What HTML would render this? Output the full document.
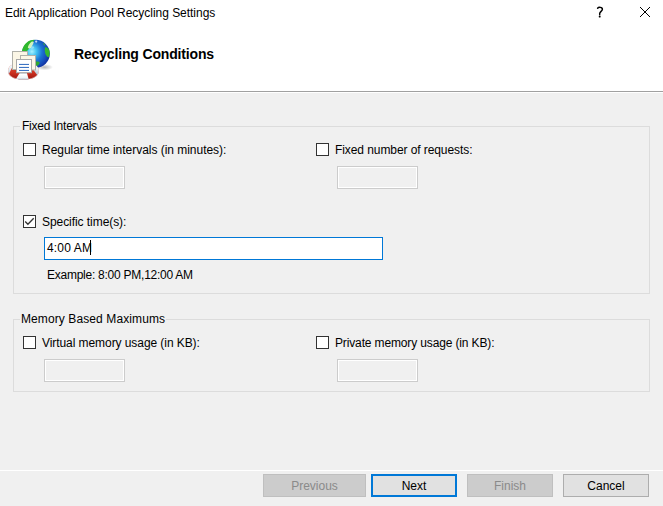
<!DOCTYPE html>
<html><head><meta charset="utf-8">
<style>
html,body{margin:0;padding:0;}
body{width:663px;height:506px;position:relative;overflow:hidden;background:#f0f0f0;font-family:"Liberation Sans",sans-serif;font-size:12px;color:#000;}
.a{position:absolute;}
.t{position:absolute;line-height:20px;white-space:pre;font-size:12px;}
.hdr{position:absolute;left:0;top:0;width:663px;height:91px;background:#fff;}
.sep1{position:absolute;left:0;top:91px;width:663px;height:1px;background:#a0a0a0;}
.sep1w{position:absolute;left:0;top:92px;width:663px;height:1px;background:#fff;}
.gb{position:absolute;border:1px solid #dcdcdc;box-sizing:border-box;}
.gbl{position:absolute;background:#f0f0f0;height:3px;}
.cb{position:absolute;width:13px;height:13px;box-sizing:border-box;border:1px solid #333;background:#fff;}
.tbd{position:absolute;box-sizing:border-box;border:1px solid #cccccc;background:#f0f0f0;box-shadow:inset 0 0 0 1px #fff;}
.tba{position:absolute;box-sizing:border-box;border:1px solid #0078d7;background:#fff;}
.btn{position:absolute;top:474px;height:23px;box-sizing:border-box;text-align:center;}
.btn span{position:absolute;left:0;right:0;top:1px;line-height:20px;}
</style></head><body>
<div class="hdr"></div>
<div class="sep1"></div>
<div class="sep1w"></div>

<div class="t" style="left:5px;top:3px;letter-spacing:-0.03px;">Edit Application Pool Recycling Settings</div>
<div class="t" style="left:74px;top:44px;font-weight:bold;font-size:14px;letter-spacing:-0.16px;">Recycling Conditions</div>

<!-- help ? -->
<svg class="a" style="left:590px;top:2px" width="20" height="20" viewBox="0 0 20 20">
  <path d="M7.6 6.2 C8.5 5.0 12.4 4.8 12.4 7.3 C12.4 9.0 9.7 9.8 9.7 11.6 L9.7 12.4" fill="none" stroke="#000" stroke-width="1.45" stroke-linecap="round"/>
  <rect x="8.8" y="13.6" width="1.8" height="1.8" rx="0.4" fill="#000"/>
</svg>
<!-- close X -->
<svg class="a" style="left:640px;top:7px" width="10" height="10" viewBox="0 0 10 10" shape-rendering="crispEdges" fill="#000"><rect x="0" y="0" width="1" height="1"/><rect x="9" y="0" width="1" height="1"/><rect x="1" y="1" width="1" height="1"/><rect x="8" y="1" width="1" height="1"/><rect x="2" y="2" width="1" height="1"/><rect x="7" y="2" width="1" height="1"/><rect x="3" y="3" width="1" height="1"/><rect x="6" y="3" width="1" height="1"/><rect x="4" y="4" width="1" height="1"/><rect x="5" y="4" width="1" height="1"/><rect x="5" y="5" width="1" height="1"/><rect x="4" y="5" width="1" height="1"/><rect x="6" y="6" width="1" height="1"/><rect x="3" y="6" width="1" height="1"/><rect x="7" y="7" width="1" height="1"/><rect x="2" y="7" width="1" height="1"/><rect x="8" y="8" width="1" height="1"/><rect x="1" y="8" width="1" height="1"/><rect x="9" y="9" width="1" height="1"/><rect x="0" y="9" width="1" height="1"/></svg>

<!-- icon -->
<svg class="a" style="left:4px;top:34px" width="52" height="52" viewBox="0 0 52 52">
  <defs>
    <radialGradient id="gl" cx="0.36" cy="0.42" r="0.66">
      <stop offset="0" stop-color="#a8f2ff"/>
      <stop offset="0.25" stop-color="#44c4f2"/>
      <stop offset="0.55" stop-color="#1c74d2"/>
      <stop offset="0.85" stop-color="#1646b6"/>
      <stop offset="1" stop-color="#0e2e9c"/>
    </radialGradient>
    <radialGradient id="sh" cx="0.5" cy="0.5" r="0.5">
      <stop offset="0" stop-color="#000" stop-opacity="0.28"/>
      <stop offset="1" stop-color="#000" stop-opacity="0"/>
    </radialGradient>
    <linearGradient id="rw" x1="0" y1="0" x2="0" y2="1">
      <stop offset="0" stop-color="#ffffff"/>
      <stop offset="0.6" stop-color="#e4eef4"/>
      <stop offset="1" stop-color="#9fb6c8"/>
    </linearGradient>
    <linearGradient id="rw2" x1="0" y1="0" x2="0" y2="1">
      <stop offset="0" stop-color="#9fb0c0"/>
      <stop offset="0.25" stop-color="#ffffff"/>
      <stop offset="0.7" stop-color="#eef4f8"/>
      <stop offset="1" stop-color="#98b0c4"/>
    </linearGradient>
    <linearGradient id="rr" x1="0" y1="0" x2="0" y2="1">
      <stop offset="0" stop-color="#e6583e"/>
      <stop offset="0.6" stop-color="#cc3020"/>
      <stop offset="1" stop-color="#9c1610"/>
    </linearGradient>
    <clipPath id="rc"><path d="M34.60,37.00 L34.55,38.07 L34.40,38.92 L34.16,39.69 L33.82,40.41 L33.38,41.08 L32.85,41.71 L32.23,42.30 L31.52,42.84 L30.72,43.33 L29.84,43.78 L28.87,44.17 L27.83,44.52 L26.70,44.82 L25.50,45.06 L24.21,45.25 L22.83,45.39 L21.31,45.47 L19.40,45.50 L17.49,45.47 L15.97,45.39 L14.59,45.25 L13.30,45.06 L12.10,44.82 L10.97,44.52 L9.93,44.17 L8.96,43.78 L8.08,43.33 L7.28,42.84 L6.57,42.30 L5.95,41.71 L5.42,41.08 L4.98,40.41 L4.64,39.69 L4.40,38.92 L4.25,38.07 L4.20,37.00 L4.25,35.93 L4.40,35.08 L4.64,34.31 L4.98,33.59 L5.42,32.92 L5.95,32.29 L6.57,31.70 L7.28,31.16 L8.08,30.67 L8.96,30.22 L9.93,29.83 L10.97,29.48 L12.10,29.18 L13.30,28.94 L14.59,28.75 L15.97,28.61 L17.49,28.53 L19.40,28.50 L21.31,28.53 L22.83,28.61 L24.21,28.75 L25.50,28.94 L26.70,29.18 L27.83,29.48 L28.87,29.83 L29.84,30.22 L30.72,30.67 L31.52,31.16 L32.23,31.70 L32.85,32.29 L33.38,32.92 L33.82,33.59 L34.16,34.31 L34.40,35.08 L34.55,35.93 Z"/></clipPath>
  </defs>
  <ellipse cx="40.5" cy="33.2" rx="8.5" ry="3.2" fill="url(#sh)"/>
  <circle cx="31.8" cy="19.8" r="14" fill="url(#gl)"/>
  <path d="M17.9 19.5 C17.9 13 21.5 8.5 26 6.6 C27.5 6 29 5.8 30.5 5.8 C30.3 6.6 29.8 7.2 29.2 7.8 C28.2 8.8 27.6 10 27 11.5 C26.3 13 25.3 14.5 24 16 C22.5 17.5 21 18.5 19.5 20.5 Z" fill="#2fb82c"/>
  <path d="M23.8 13.8 C24.2 11.5 25.5 9.2 27.5 7.8 C28.5 7.4 29.5 7.6 29.8 8.2 C29 10 28.2 12 27.2 13.5 C26.5 14.5 24.5 15 23.8 13.8 Z" fill="#e4f8c8" opacity="0.9"/>
  <path d="M27.5 12.5 C28.8 12 30 12.5 30.3 13.6 C29.5 14.8 28 15.2 27 14.5 Z" fill="#c8f4ff" opacity="0.5"/>
  <ellipse cx="32.2" cy="7.6" rx="1.1" ry="1.1" fill="#ffffff" opacity="0.75"/>
  <path d="M41 13.5 C42.5 12.6 44.5 14.2 45.4 16.8 C45.9 19 45.5 21.5 44.7 23.3 C43.2 23 41.8 21.5 41.2 19.2 C40.7 17.2 40.6 15 41 13.5 Z" fill="#36b830"/>
  <path d="M39.2 9 C40.2 8.8 41.3 10 41.3 11.8 C40.3 12 39.4 10.8 39.2 9 Z" fill="#3cb038" opacity="0.8"/>
  <path d="M31 28 C32.8 27.2 35.2 27.6 35.8 28.8 C35.2 30.5 33.8 31.8 32.2 32.2 C31.5 31 31 29.5 31 28 Z" fill="#2ea830"/>
  <!-- ring -->
  <path d="M34.60,37.00 L34.55,38.07 L34.40,38.92 L34.16,39.69 L33.82,40.41 L33.38,41.08 L32.85,41.71 L32.23,42.30 L31.52,42.84 L30.72,43.33 L29.84,43.78 L28.87,44.17 L27.83,44.52 L26.70,44.82 L25.50,45.06 L24.21,45.25 L22.83,45.39 L21.31,45.47 L19.40,45.50 L17.49,45.47 L15.97,45.39 L14.59,45.25 L13.30,45.06 L12.10,44.82 L10.97,44.52 L9.93,44.17 L8.96,43.78 L8.08,43.33 L7.28,42.84 L6.57,42.30 L5.95,41.71 L5.42,41.08 L4.98,40.41 L4.64,39.69 L4.40,38.92 L4.25,38.07 L4.20,37.00 L4.25,35.93 L4.40,35.08 L4.64,34.31 L4.98,33.59 L5.42,32.92 L5.95,32.29 L6.57,31.70 L7.28,31.16 L8.08,30.67 L8.96,30.22 L9.93,29.83 L10.97,29.48 L12.10,29.18 L13.30,28.94 L14.59,28.75 L15.97,28.61 L17.49,28.53 L19.40,28.50 L21.31,28.53 L22.83,28.61 L24.21,28.75 L25.50,28.94 L26.70,29.18 L27.83,29.48 L28.87,29.83 L29.84,30.22 L30.72,30.67 L31.52,31.16 L32.23,31.70 L32.85,32.29 L33.38,32.92 L33.82,33.59 L34.16,34.31 L34.40,35.08 L34.55,35.93 Z" fill="url(#rr)"/>
  <g clip-path="url(#rc)">
    <polygon points="-2,26 9.5,26 8,33.8 3.9,42 -2,42" fill="url(#rw)"/>
    <polygon points="16,38.5 22.8,38.5 24.9,46 11.3,46" fill="url(#rw2)"/>
    <polygon points="29.5,36 33.5,41.5 42,41.5 42,26 30,26" fill="url(#rw)"/>
    <path d="M34.60,37.00 L34.55,38.07 L34.40,38.92 L34.16,39.69 L33.82,40.41 L33.38,41.08 L32.85,41.71 L32.23,42.30 L31.52,42.84 L30.72,43.33 L29.84,43.78 L28.87,44.17 L27.83,44.52 L26.70,44.82 L25.50,45.06 L24.21,45.25 L22.83,45.39 L21.31,45.47 L19.40,45.50 L17.49,45.47 L15.97,45.39 L14.59,45.25 L13.30,45.06 L12.10,44.82 L10.97,44.52 L9.93,44.17 L8.96,43.78 L8.08,43.33 L7.28,42.84 L6.57,42.30 L5.95,41.71 L5.42,41.08 L4.98,40.41 L4.64,39.69 L4.40,38.92 L4.25,38.07 L4.20,37.00 L4.25,35.93 L4.40,35.08 L4.64,34.31 L4.98,33.59 L5.42,32.92 L5.95,32.29 L6.57,31.70 L7.28,31.16 L8.08,30.67 L8.96,30.22 L9.93,29.83 L10.97,29.48 L12.10,29.18 L13.30,28.94 L14.59,28.75 L15.97,28.61 L17.49,28.53 L19.40,28.50 L21.31,28.53 L22.83,28.61 L24.21,28.75 L25.50,28.94 L26.70,29.18 L27.83,29.48 L28.87,29.83 L29.84,30.22 L30.72,30.67 L31.52,31.16 L32.23,31.70 L32.85,32.29 L33.38,32.92 L33.82,33.59 L34.16,34.31 L34.40,35.08 L34.55,35.93 Z" fill="none" stroke="#f4f6f8" stroke-width="1.2" opacity="0.55"/>
  </g>
  <!-- docs -->
  <rect x="8.5" y="17.5" width="15" height="18" fill="#fbf6e6" stroke="#b0b0aa"/>
  <rect x="16.5" y="21.5" width="15" height="14.5" fill="#fbf6e6" stroke="#b0b0aa"/>
  <rect x="12.5" y="25.5" width="15" height="13.2" fill="#ffffff" stroke="#a8a8a8"/>
  <rect x="15" y="29.9" width="10" height="1.1" fill="#3d74c4"/>
  <rect x="15" y="32.9" width="10" height="1.1" fill="#3d74c4"/>
  <rect x="15" y="35.9" width="10" height="1.1" fill="#3d74c4"/>
</svg>

<!-- Group 1 -->
<div class="gb" style="left:13px;top:126px;width:637px;height:168px;"></div>
<div class="gbl" style="left:20px;top:125px;width:79px;"></div>
<div class="t" style="left:22px;top:116px;letter-spacing:-0.21px;">Fixed Intervals</div>

<div class="cb" style="left:23px;top:143px;"></div>
<div class="t" style="left:42px;top:140px;letter-spacing:-0.03px;">Regular time intervals (in minutes):</div>
<div class="tbd" style="left:44px;top:166px;width:81px;height:23px;"></div>

<div class="cb" style="left:316px;top:143px;"></div>
<div class="t" style="left:335px;top:140px;letter-spacing:-0.08px;">Fixed number of requests:</div>
<div class="tbd" style="left:337px;top:166px;width:81px;height:23px;"></div>

<div class="cb" style="left:23px;top:215px;"></div>
<svg class="a" style="left:23px;top:215px" width="13" height="13" viewBox="0 0 13 13">
  <path d="M2.2 6.5 L4.9 9.2 L10.7 3.3" fill="none" stroke="#333" stroke-width="1.35"/>
</svg>
<div class="t" style="left:42px;top:212px;letter-spacing:-0.06px;">Specific time(s):</div>
<div class="tba" style="left:44px;top:237px;width:339px;height:23px;"></div>
<div class="t" style="left:47px;top:238px;letter-spacing:0.15px;">4:00 AM</div>
<div class="a" style="left:90px;top:240px;width:1px;height:15px;background:#000;"></div>
<div class="t" style="left:47px;top:265px;letter-spacing:-0.25px;">Example: 8:00 PM,12:00 AM</div>

<!-- Group 2 -->
<div class="gb" style="left:13px;top:319px;width:637px;height:73px;"></div>
<div class="gbl" style="left:20px;top:318px;width:146px;"></div>
<div class="t" style="left:21px;top:309px;letter-spacing:0.1px;">Memory Based Maximums</div>

<div class="cb" style="left:23px;top:336px;"></div>
<div class="t" style="left:42px;top:333px;letter-spacing:-0.07px;">Virtual memory usage (in KB):</div>
<div class="tbd" style="left:44px;top:359px;width:81px;height:23px;"></div>

<div class="cb" style="left:316px;top:336px;"></div>
<div class="t" style="left:335px;top:333px;letter-spacing:-0.14px;">Private memory usage (in KB):</div>
<div class="tbd" style="left:337px;top:359px;width:81px;height:23px;"></div>

<!-- footer -->
<div class="a" style="left:0;top:470px;width:663px;height:1px;background:#fff;"></div>
<div class="btn" style="left:263px;width:103px;background:#ccc;border:1px solid #bfbfbf;color:#8a8a8a;"><span>Previous</span></div>
<div class="btn" style="left:371px;width:86px;background:#e1e1e1;border:2px solid #0078d7;"><span style="top:0px">Next</span></div>
<div class="btn" style="left:467px;width:86px;background:#ccc;border:1px solid #bfbfbf;color:#8a8a8a;"><span>Finish</span></div>
<div class="btn" style="left:563px;width:86px;background:#e1e1e1;border:1px solid #adadad;"><span>Cancel</span></div>
</body></html>
